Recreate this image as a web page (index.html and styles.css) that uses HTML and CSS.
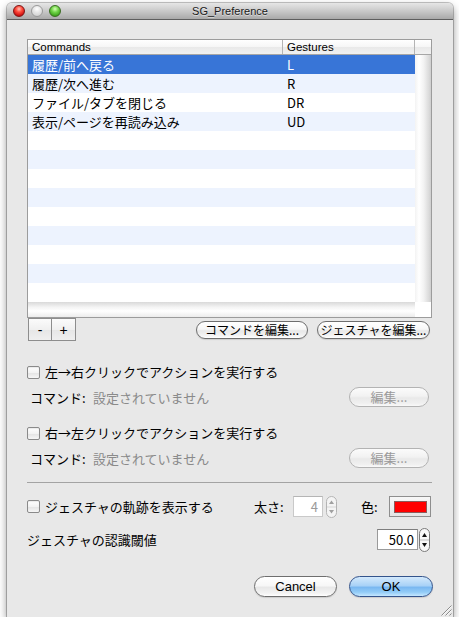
FILE: index.html
```html
<!DOCTYPE html>
<html lang="ja">
<head>
<meta charset="utf-8">
<title>SG_Preference</title>
<link rel="stylesheet" href="styles.css">
</head>
<body>
<div class="window">
  <div class="titlebar">
    <div class="lights">
      <span class="light red"></span>
      <span class="light gray"></span>
      <span class="light green"></span>
    </div>
    <div class="title">SG_Preference</div>
    <div></div>
  </div>

  <div class="content">
    <div class="table">
      <div class="thead">
        <div class="th cmd">Commands</div>
        <div class="th ges">Gestures</div>
        <div class="th corner"></div>
      </div>
      <div class="tbody">
        <div class="rows">
          <div class="row sel"><span class="c1">履歴/前へ戻る</span><span class="c2">L</span></div>
          <div class="row alt"><span class="c1">履歴/次へ進む</span><span class="c2">R</span></div>
          <div class="row"><span class="c1">ファイル/タブを閉じる</span><span class="c2">DR</span></div>
          <div class="row alt"><span class="c1">表示/ページを再読み込み</span><span class="c2">UD</span></div>
          <div class="row"></div>
          <div class="row alt"></div>
          <div class="row"></div>
          <div class="row alt"></div>
          <div class="row"></div>
          <div class="row alt"></div>
          <div class="row"></div>
          <div class="row alt"></div>
          <div class="row"></div>
        </div>
        <div class="vscroll"></div>
      </div>
      <div class="hbar">
        <div class="hscroll"></div>
        <div class="hcorner"></div>
      </div>
    </div>

    <div class="table-actions">
      <div class="seg">
        <button class="segbtn">-</button><button class="segbtn">+</button>
      </div>
      <div class="edit-btns">
        <button class="pill small">コマンドを編集...</button>
        <button class="pill small">ジェスチャを編集...</button>
      </div>
    </div>

    <div class="check-row first">
      <span class="cb"></span><span class="cb-label">左→右クリックでアクションを実行する</span>
    </div>
    <div class="cmd-row">
      <span class="cmd-label">コマンド:</span><span class="cmd-value">設定されていません</span>
      <button class="pill disabled edit">編集...</button>
    </div>

    <div class="check-row second">
      <span class="cb"></span><span class="cb-label">右→左クリックでアクションを実行する</span>
    </div>
    <div class="cmd-row">
      <span class="cmd-label">コマンド:</span><span class="cmd-value">設定されていません</span>
      <button class="pill disabled edit">編集...</button>
    </div>

    <div class="separator"></div>

    <div class="trail-row">
      <span class="cb"></span><span class="cb-label">ジェスチャの軌跡を表示する</span>
      <div class="trail-opts">
        <span class="opt-label w">太さ:</span>
        <span class="field disabled-field">4</span>
        <svg class="stepper" width="11" height="22" viewBox="0 0 11 22">
          <rect x="0.5" y="0.5" width="10" height="21" rx="5" fill="#f4f4f4" stroke="#b4b4b4"/>
          <line x1="1" y1="11" x2="10" y2="11" stroke="#d6d6d6"/>
          <path d="M3 8 L5.5 4.5 L8 8 Z" fill="#a0a0a0"/>
          <path d="M3 14 L5.5 17.5 L8 14 Z" fill="#a0a0a0"/>
        </svg>
        <span class="opt-label c">色:</span>
        <span class="well"><span class="swatch"></span></span>
      </div>
    </div>

    <div class="thresh-row">
      <span class="thresh-label">ジェスチャの認識閾値</span>
      <div class="thresh-ctl">
        <span class="field num">50.0</span>
        <svg class="stepper big" width="11" height="24" viewBox="0 0 11 24">
          <rect x="0.5" y="0.5" width="10" height="23" rx="5" fill="#f8f8f8" stroke="#7a7a7a"/>
          <line x1="1" y1="12" x2="10" y2="12" stroke="#bdbdbd"/>
          <path d="M3 9 L5.5 5 L8 9 Z" fill="#111"/>
          <path d="M3 15 L5.5 19 L8 15 Z" fill="#111"/>
        </svg>
      </div>
    </div>

    <div class="footer">
      <button class="pill big cancel">Cancel</button>
      <button class="pill big ok">OK</button>
    </div>
  </div>

  <svg class="grip" width="12" height="12" viewBox="0 0 12 12">
    <path d="M11.5 1.5 L1.5 11.5 M11.5 5.5 L5.5 11.5 M11.5 9.5 L9.5 11.5" stroke="#8c8c8c" stroke-width="1"/>
    <path d="M11.5 2.5 L2.5 11.5 M11.5 6.5 L6.5 11.5" stroke="#ffffff" stroke-width="1" opacity="0.8"/>
  </svg>
</div>
</body>
</html>
```

FILE: styles.css
```css
* { box-sizing: border-box; }

html, body {
  margin: 0;
  padding: 0;
  background: #ffffff;
}

body {
  font-family: "Noto Sans CJK JP", "Liberation Sans", sans-serif;
  font-size: 13px;
  color: #000;
  padding: 3px 0 0 7px;
}

.window {
  position: relative;
  width: 446px;
  height: 614px;
  background: #e8e8e8;
  border-radius: 5px 5px 0 0;
  box-shadow: 0 0 0 1px rgba(0, 0, 0, 0.22), 0 4px 9px rgba(0, 0, 0, 0.45);
  display: flex;
  flex-direction: column;
}

/* Title bar */
.titlebar {
  height: 17px;
  flex: none;
  display: grid;
  grid-template-columns: 1fr auto 1fr;
  align-items: center;
  background: linear-gradient(#e6e6e6, #c9c9c9 50%, #a9a9a9);
  border-bottom: 1px solid #5e5e5e;
  border-radius: 5px 5px 0 0;
}

.lights {
  display: flex;
  gap: 6px;
  padding-left: 6px;
  align-items: center;
}

.light {
  width: 12px;
  height: 12px;
  border-radius: 50%;
  display: block;
}

.light.red {
  background: radial-gradient(circle at 50% 30%, #ffc3b8 0%, #ff5040 35%, #cf1010 75%, #a00000 100%);
  border: 1px solid #7d1515;
}

.light.gray {
  background: radial-gradient(circle at 50% 30%, #ffffff 0%, #e4e4e4 45%, #c8c8c8 100%);
  border: 1px solid #9a9a9a;
}

.light.green {
  background: radial-gradient(circle at 50% 30%, #d8ffb8 0%, #72d64a 38%, #3ea31c 78%, #2d7d12 100%);
  border: 1px solid #3a6d22;
}

.title {
  font-family: "Liberation Sans", sans-serif;
  font-size: 11px;
  line-height: 16px;
  color: #1a1a1a;
  text-shadow: 0 1px 0 rgba(255, 255, 255, 0.5);
}

/* Content */
.content {
  flex: 1;
  padding: 19px 21px 0 20px;
  display: flex;
  flex-direction: column;
}

/* Table */
.table {
  width: 405px;
  height: 279px;
  border: 1px solid #9c9c9c;
  background: #fff;
  display: flex;
  flex-direction: column;
}

.thead {
  height: 15px;
  display: flex;
  background: linear-gradient(#ffffff, #f6f6f6 50%, #e9e9e9 51%, #f1f1f1);
  border-bottom: 1px solid #a6a6a6;
}

.th {
  font-family: "Liberation Sans", sans-serif;
  font-size: 11.5px;
  line-height: 14px;
  padding-left: 4px;
  border-right: 1px solid #b4b4b4;
  color: #000;
}

.th.cmd { width: 255px; }
.th.ges { width: 132px; }
.th.corner { flex: 1; border-right: none; }

.tbody {
  height: 247px;
  display: flex;
}

.rows {
  width: 387px;
  display: flex;
  flex-direction: column;
}

.row {
  height: 19px;
  display: flex;
  background: #fff;
  line-height: 19px;
}

.row.alt { background: #edf3fe; }
.row.sel { background: #3875d7; color: #fff; }

.c1 { width: 255px; padding-left: 4px; }
.c2 { padding-left: 4px; }

.vscroll {
  flex: 1;
  background: linear-gradient(to right, #f3f3f3, #ffffff 25%, #f2f2f2 55%, #dcdcdc 85%, #cfcfcf);
}

.hbar {
  height: 15px;
  display: flex;
}

.hscroll {
  width: 387px;
  background: linear-gradient(#d9d9d9, #f4f4f4 35%, #ffffff 60%, #ececec);
}

.hcorner { flex: 1; background: #fff; }

/* Under the table */
.table-actions {
  height: 23px;
  display: flex;
  align-items: center;
  justify-content: space-between;
}

.seg {
  display: flex;
  height: 23px;
  margin-left: 1px;
}

.segbtn {
  width: 24px;
  height: 23px;
  margin: 0;
  padding: 0;
  border: 1px solid #8d8d8d;
  background: linear-gradient(#fbfbfb, #f0f0f0 50%, #e6e6e6 51%, #efefef);
  font-family: "Liberation Sans", sans-serif;
  font-size: 14px;
  line-height: 20px;
  color: #000;
}

.segbtn + .segbtn { border-left: none; }

.edit-btns {
  display: flex;
  gap: 9px;
  margin-right: 2px;
}

.pill {
  margin: 0;
  padding: 0;
  border: 1px solid #6e6e6e;
  border-radius: 10px;
  background: linear-gradient(#ffffff, #f7f7f7 45%, #e8e8e8 55%, #f3f3f3 85%, #ffffff);
  box-shadow: 0 1px 1px rgba(0, 0, 0, 0.12);
  font-family: "Noto Sans CJK JP", "Liberation Sans", sans-serif;
  color: #000;
  white-space: nowrap;
}

.pill.small {
  height: 18px;
  font-size: 12px;
  line-height: 16px;
}

.edit-btns .pill.small:first-child { width: 112px; }
.edit-btns .pill.small:last-child { width: 113px; }

.pill.disabled {
  border-color: #b3b3b3;
  color: #9a9a9a;
  background: linear-gradient(#fbfbfb, #f2f2f2 45%, #e9e9e9 55%, #f0f0f0 85%, #f9f9f9);
  box-shadow: none;
}

.pill.edit {
  width: 80px;
  height: 20px;
  font-size: 13px;
  line-height: 18px;
  margin-left: auto;
  margin-right: 3px;
}

/* Check rows */
.check-row, .trail-row {
  height: 20px;
  display: flex;
  align-items: center;
}

.check-row.first { margin-top: 21px; }
.check-row.second { margin-top: 16px; }

.cb {
  width: 13px;
  height: 13px;
  flex: none;
  border: 1px solid #8a8a8a;
  border-radius: 2px;
  background: linear-gradient(#ffffff, #f3f3f3 50%, #e3e3e3 51%, #f6f6f6);
  box-shadow: inset 0 1px 1px rgba(0, 0, 0, 0.08);
  margin-right: 5px;
}

.cb-label { line-height: 20px; }

.cmd-row {
  height: 20px;
  margin-top: 5px;
  display: flex;
  align-items: center;
  padding-left: 3px;
}

.cmd-label { width: 63px; }
.cmd-value { color: #8a8a8a; }

.separator {
  height: 1px;
  background: #a3a3a3;
  margin-top: 14px;
  margin-right: 0;
}

/* Trail */
.trail-row {
  height: 21px;
  margin-top: 13px;
}

.trail-opts {
  margin-left: auto;
  display: flex;
  align-items: center;
  margin-right: 1px;
}

.opt-label.w { width: 39px; }
.opt-label.c { width: 28px; margin-left: 24px; }

.field {
  height: 21px;
  background: #fff;
  border: 1px solid #9a9a9a;
  border-top-color: #7e7e7e;
  text-align: right;
  padding-right: 4px;
  line-height: 19px;
  font-family: "Noto Sans CJK JP", "Liberation Sans", sans-serif;
}

.field.disabled-field {
  width: 30px;
  color: #9a9a9a;
  border-color: #c9c9c9;
  border-top-color: #b5b5b5;
}

.stepper { display: block; margin-left: 3px; }

.well {
  width: 42px;
  height: 21px;
  border: 1px solid #8e8e8e;
  background: linear-gradient(#f7f7f7, #e4e4e4);
  padding: 4px 3px 3px 4px;
  display: block;
}

.swatch {
  display: block;
  width: 100%;
  height: 100%;
  background: #ff0000;
  border: 1px solid #8a5a5a;
}

/* Threshold */
.thresh-row {
  height: 21px;
  margin-top: 12px;
  display: flex;
  align-items: center;
}

.thresh-ctl {
  margin-left: auto;
  display: flex;
  align-items: center;
  margin-right: 2px;
}

.field.num {
  width: 41px;
  color: #000;
  padding-right: 3px;
}

.stepper.big { margin-left: 1px; }

/* Footer */
.footer {
  margin-top: 26px;
  display: flex;
  justify-content: flex-end;
  gap: 12px;
  margin-right: -1px;
}

.pill.big {
  height: 21px;
  border-radius: 11px;
  font-family: "Liberation Sans", sans-serif;
  font-size: 13px;
  line-height: 19px;
}

.pill.cancel { width: 83px; }

.pill.ok {
  width: 84px;
  border-color: #34548c;
  background: linear-gradient(#d3e9fc, #a9d2f7 45%, #7ab8f1 55%, #93ccf7 80%, #c5e7ff);
}

.grip {
  position: absolute;
  right: 1px;
  bottom: 1px;
}
```
